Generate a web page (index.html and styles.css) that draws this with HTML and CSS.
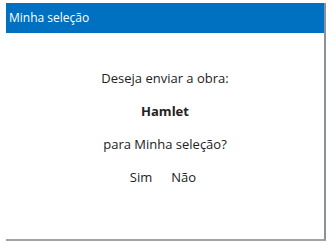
FILE: index.html
```html
<!DOCTYPE html>
<html lang="pt">
  <head>
    <meta charset="UTF-8" />
    <title>Minha seleção</title>
    <link rel="stylesheet" href="styles.css">
  </head>
  <body>
    <div class="dialog">
      <div class="dialog-title">Minha seleção</div>
      <div class="dialog-body">
        <p>Deseja enviar a obra:</p>
        <p class="work">Hamlet</p>
        <p>para Minha seleção?</p>
        <div class="actions">
          <a href="#" class="action">Sim</a>
          <a href="#" class="action">Não</a>
        </div>
      </div>
    </div>
  </body>
</html>
```

FILE: styles.css
```css
body {
  margin: 0;
  padding: 0;
  background-color: #fff;
  font-family: "Open Sans", "Noto Sans", Arial, sans-serif;
  color: #222;
}

.dialog {
  margin: 3px 0 0 6px;
  width: 318px;
  height: 236px;
  background-color: #fff;
  border-right: 2px solid #8a9199;
  border-bottom: 2px solid #a0a4a8;
}

.dialog-title {
  background-color: #0070c0;
  color: #fff;
  font-size: 12px;
  height: 30px;
  line-height: 30px;
  padding-left: 3px;
}

.dialog-body {
  text-align: center;
  font-size: 13px;
  padding-top: 36px;
}

.dialog-body p {
  margin: 0 0 15px 0;
  line-height: 18px;
}

.dialog-body .work {
  font-weight: bold;
}

.actions {
  display: flex;
  justify-content: center;
  gap: 19px;
  padding-right: 4px;
}

.action {
  color: #222;
  text-decoration: none;
  line-height: 18px;
}
```
